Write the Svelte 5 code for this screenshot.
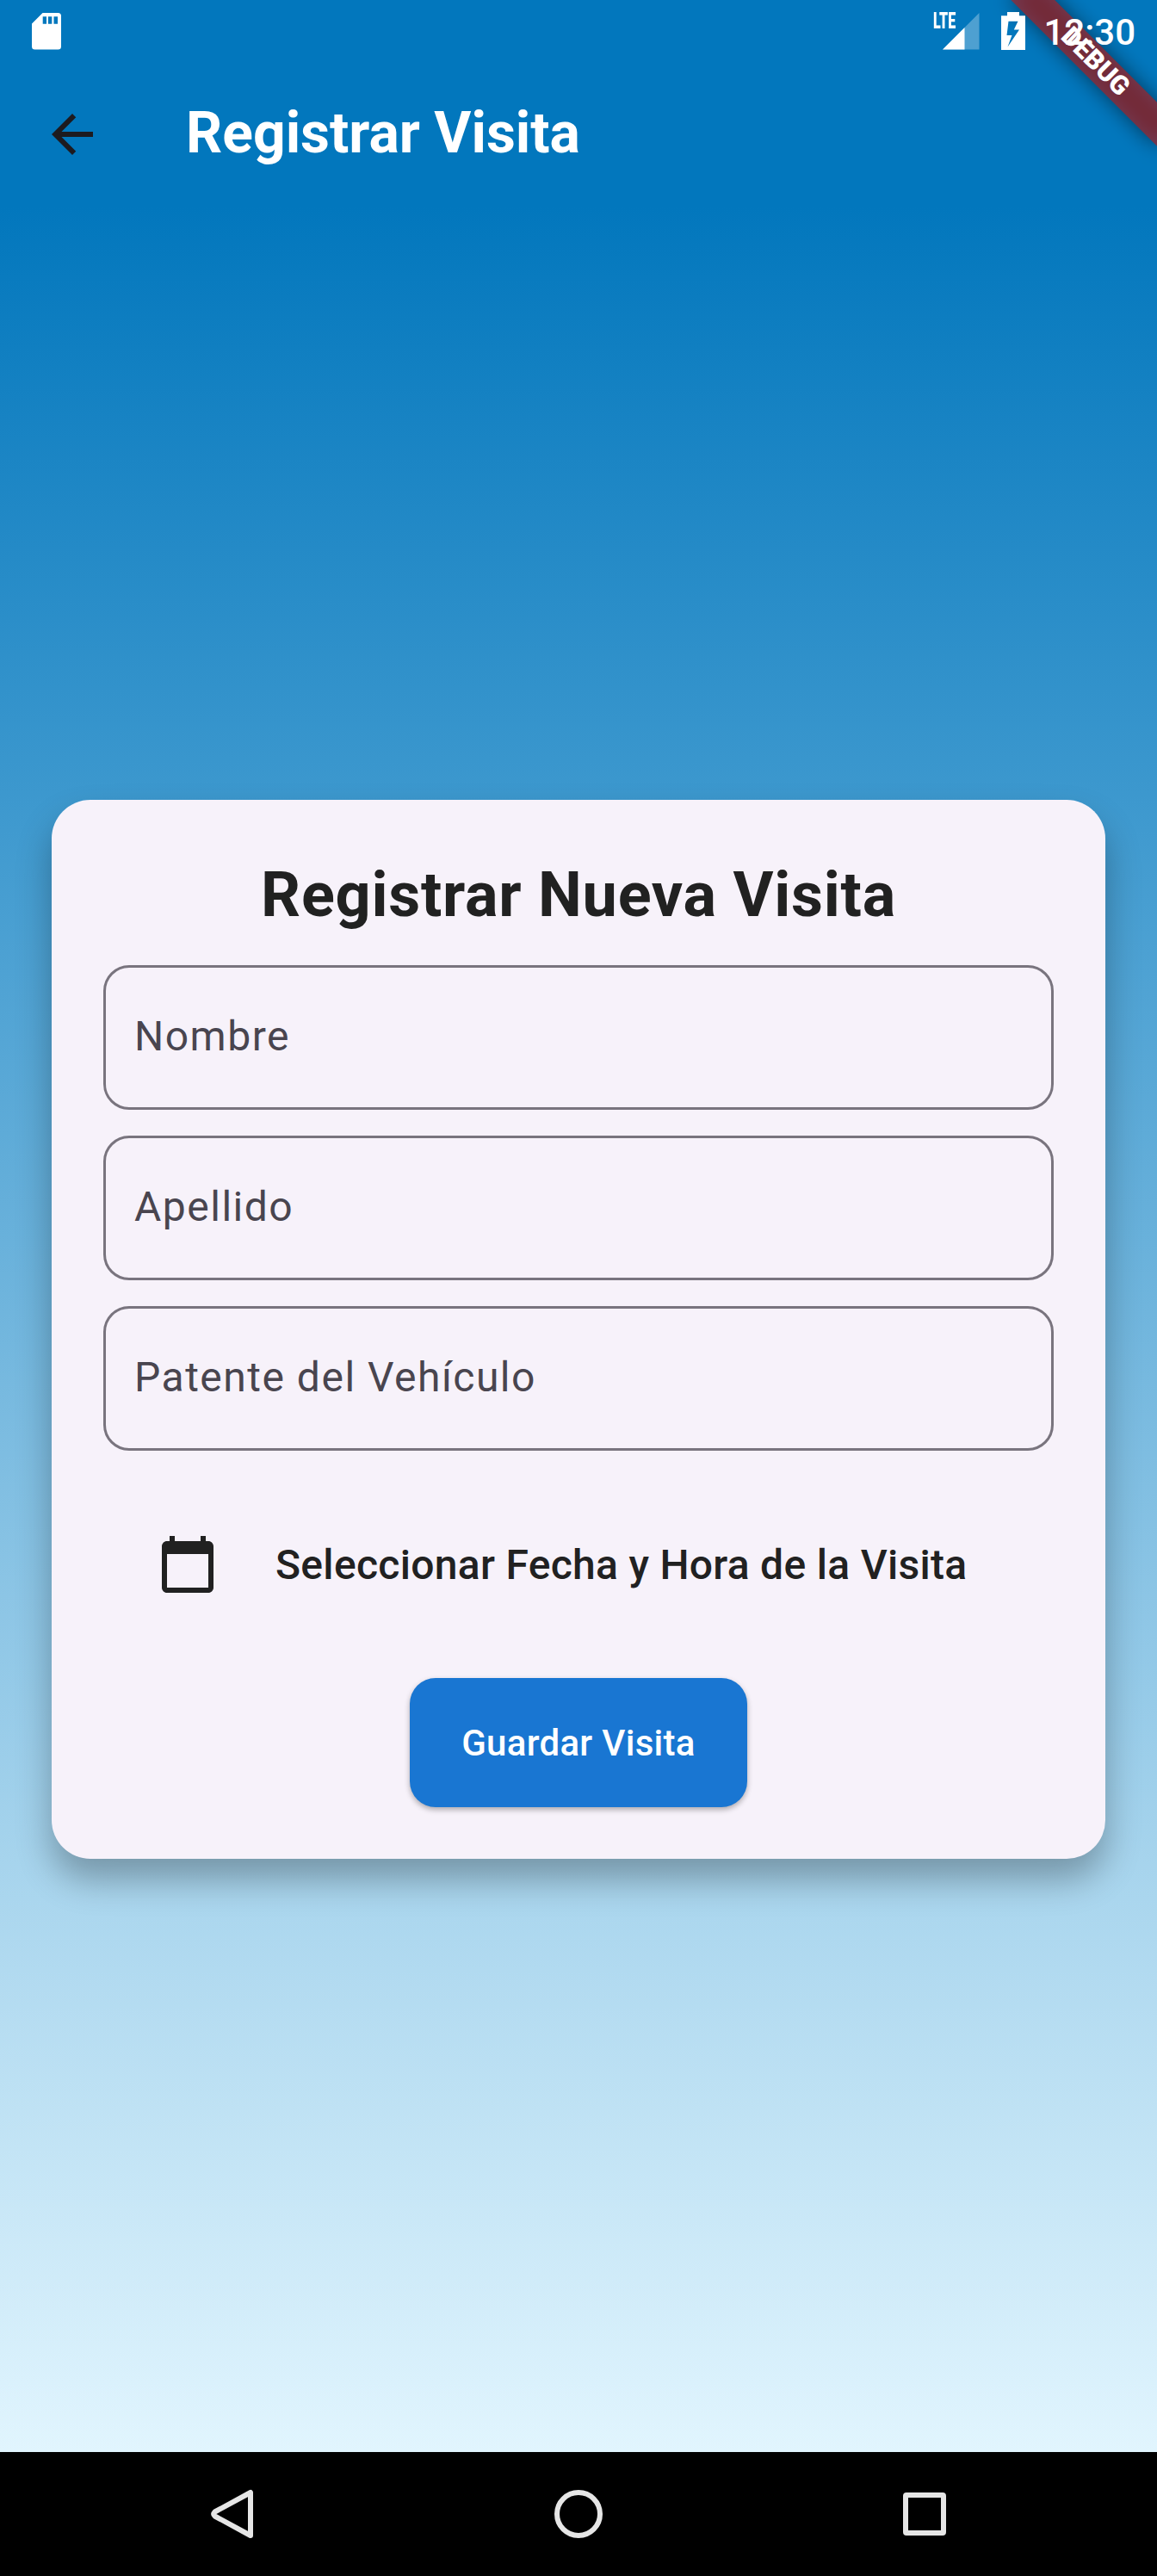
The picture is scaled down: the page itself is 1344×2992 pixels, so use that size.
<script>
  const fields = [
    { id: 'nombre', label: 'Nombre' },
    { id: 'apellido', label: 'Apellido' },
    { id: 'patente', label: 'Patente del Vehículo' }
  ];
</script>

<div class="screen">
  <div class="debug"><span>DEBUG</span></div>

  <div class="status">
    <svg class="sd" viewBox="0 0 34 43" width="34" height="43">
      <path fill-rule="evenodd" fill="#fff" d="M12.5 0H30.5Q34 0 34 3.5V39Q34 42.5 30.5 42.5H3.5Q0 42.5 0 39V12.5ZM12.7 4.3V12.8H17V4.3ZM19 4.3V12.8H23.3V4.3ZM25.5 4.3V12.8H30V4.3Z" />
    </svg>
    <div class="status-right">
      <div class="network">
        <span class="lte">LTE</span>
        <svg viewBox="0 0 43 43" width="43" height="43">
          <path fill="#fff" fill-opacity=".3" d="M0 42.5L42.5 0V42.5Z" />
          <path fill="#fff" d="M0 42.5L25.5 17V42.5Z" />
        </svg>
      </div>
      <svg class="battery" viewBox="0 0 28 44" width="28" height="44">
        <path fill-rule="evenodd" fill="#fff" d="M7 0H21V4.3H28V44H0V4.3H7ZM8.5 10.8L6.5 27H12.5L7.5 40.5L21 20.5H14.8L19.5 10.8Z" />
      </svg>
      <span class="clock">12:30</span>
    </div>
  </div>

  <header class="appbar">
    <svg viewBox="0 0 24 24" width="72" height="72">
      <path fill="#1d1b20" d="M20 11H7.83l5.59-5.59L12 4l-8 8 8 8 1.41-1.41L7.83 13H20v-2z" />
    </svg>
    <h1>Registrar Visita</h1>
  </header>

  <main>
    <section class="card">
      <h2>Registrar Nueva Visita</h2>
      <div class="fields">
        {#each fields as field (field.id)}
          <div class="field">{field.label}</div>
        {/each}
      </div>
      <div class="date">
        <svg viewBox="0 0 24 24" width="72" height="72">
          <path fill="#212121" d="M20 3h-1V1h-2v2H7V1H5v2H4c-1.1 0-2 .9-2 2v16c0 1.1.9 2 2 2h16c1.1 0 2-.9 2-2V5c0-1.1-.9-2-2-2zm0 18H4V8h16v13z" />
        </svg>
        <span>Seleccionar Fecha y Hora de la Visita</span>
      </div>
      <button>Guardar Visita</button>
    </section>
  </main>

  <nav>
    <svg viewBox="0 0 60 60" width="60" height="60">
      <path d="M51 5V55L9.5 32.5Q7 30 9.5 27.5Z" />
    </svg>
    <svg viewBox="0 0 60 60" width="60" height="60">
      <circle cx="30" cy="30" r="25" />
    </svg>
    <svg viewBox="0 0 60 60" width="60" height="60">
      <rect x="8" y="8" width="44" height="44" rx="1" />
    </svg>
  </nav>
</div>

<style>
  :global(body) {
    margin: 0;
  }
  .screen {
    position: relative;
    width: 1344px;
    height: 2992px;
    overflow: hidden;
    display: flex;
    flex-direction: column;
    background: #0277bd;
    font-family: Roboto, sans-serif;
  }
  .status {
    position: relative;
    z-index: 2;
    height: 72px;
    box-sizing: border-box;
    padding: 0 25px 0 37px;
    display: flex;
    justify-content: space-between;
    align-items: center;
    color: #fff;
  }
  .status-right {
    display: flex;
    align-items: center;
  }
  .network {
    position: relative;
    width: 43px;
    height: 43px;
    margin-right: 25px;
  }
  .network svg,
  .battery {
    display: block;
  }
  .lte {
    position: absolute;
    left: -11px;
    top: 0;
    font-size: 26px;
    line-height: 19px;
    font-weight: 900;
    transform: scaleX(0.62);
    transform-origin: 0 50%;
  }
  .battery {
    margin-right: 21px;
  }
  .clock {
    padding-top: 3px;
    font-size: 42px;
    font-weight: 500;
    line-height: 69px;
  }
  .debug {
    position: absolute;
    z-index: 1;
    top: 84px;
    right: -120px;
    width: 240px;
    height: 36px;
    transform-origin: 120px -84px;
    transform: rotate(45deg);
    color: #fff;
    font-size: 30.6px;
    font-weight: 900;
    line-height: 33px;
    text-align: center;
  }
  .debug::before,
  .debug::after {
    content: '';
    position: absolute;
    inset: 0;
  }
  .debug::before {
    background: rgba(0, 0, 0, 0.5);
    filter: blur(12px);
  }
  .debug::after {
    background: rgba(183, 28, 28, 0.627);
  }
  .debug span {
    position: relative;
    z-index: 1;
  }
  .appbar {
    height: 168px;
    box-sizing: border-box;
    padding-left: 48px;
    display: flex;
    align-items: center;
    gap: 96px;
  }
  h1 {
    margin: 0;
    padding-bottom: 3px;
    color: #fff;
    font-size: 66px;
    line-height: 81px;
    font-weight: 700;
  }
  main {
    flex: 1;
    display: flex;
    align-items: center;
    padding: 0 60px;
    background: linear-gradient(#0277bd, #e1f5fe);
  }
  .card {
    flex: 1;
    height: 1230px;
    box-sizing: border-box;
    padding: 60px;
    border-radius: 45px;
    background: #f7f2fa;
    box-shadow: 0 24px 40px rgba(0, 0, 0, 0.29);
    display: flex;
    flex-direction: column;
    align-items: center;
  }
  h2 {
    margin: 0 0 31px;
    color: #212121;
    font-size: 72px;
    line-height: 101px;
    font-weight: 700;
    letter-spacing: 0.75px;
  }
  .fields {
    align-self: stretch;
    display: flex;
    flex-direction: column;
    gap: 30px;
  }
  .field {
    height: 168px;
    box-sizing: border-box;
    border: 3px solid #79747e;
    border-radius: 30px;
    padding-left: 33px;
    color: #49454f;
    font-size: 48px;
    line-height: 160px;
    letter-spacing: 1.5px;
  }
  .date {
    align-self: stretch;
    margin-top: 96px;
    padding-left: 62px;
    height: 72px;
    display: flex;
    align-items: center;
    gap: 66px;
    color: #212121;
    font-size: 48px;
    font-weight: 500;
    letter-spacing: 0.3px;
    white-space: nowrap;
  }
  button {
    margin-top: 96px;
    width: 392px;
    height: 150px;
    padding: 2px 0 0;
    border: 0;
    border-radius: 30px;
    background: #1976d2;
    color: #fff;
    font: 500 42px/60px Roboto, sans-serif;
    letter-spacing: 0.3px;
    box-shadow: 0 3px 6px rgba(0, 0, 0, 0.3);
  }
  nav {
    height: 144px;
    background: #000;
    display: grid;
    grid-template-columns: repeat(3, 402px);
    place-content: center;
    place-items: center;
  }
  nav svg {
    fill: none;
    stroke: #e6e6e6;
    stroke-width: 6;
    stroke-linejoin: round;
  }
</style>
